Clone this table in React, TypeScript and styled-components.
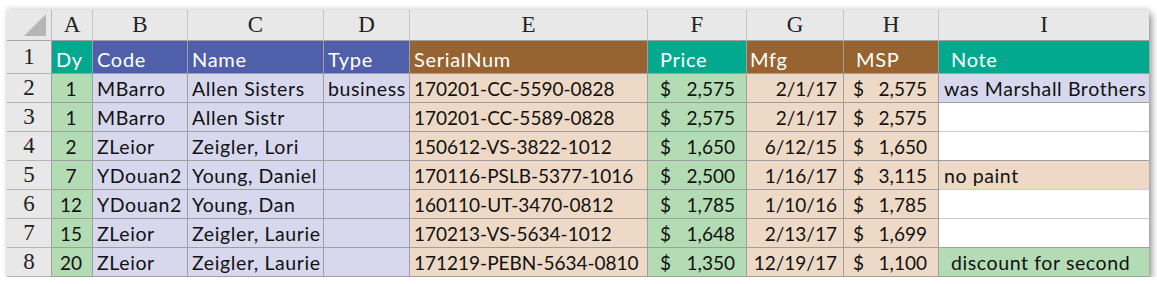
import * as React from "react";
import styled, { createGlobalStyle } from "styled-components";

const GlobalStyle = createGlobalStyle`
  body {
    margin: 0;
    background: #ffffff;
  }
`;

const palette = {
  teal: "#03a98e",
  blue: "#4f5fa9",
  brown: "#976331",
  green: "#b4dcb4",
  lav: "#d7d8ee",
  tan: "#edd9c6",
  white: "#ffffff",
};

type Tone = keyof typeof palette;

const grid = "#9f9f9f";
const lavLine = "#c9c6e6";

const Sheet = styled.div`
  margin: 10px 0 0 7px;
  width: 1142px;
  display: grid;
  grid-template-columns: 45px 41px 95px 136px 86px 238px 99px 97px 95px 210px;
  grid-template-rows: 31px 33px repeat(7, 29px);
  background: #e8e8e8;
  box-shadow: 3px 4px 7px rgba(0, 0, 0, 0.38), 0 -2px 5px rgba(0, 0, 0, 0.12);
`;

const Corner = styled.div`
  display: flex;
  align-items: flex-end;
  justify-content: flex-end;
  padding: 0 5px 4px 0;
  border-right: 1px solid #bcbcbc;
  border-bottom: 1px solid #a8a8a8;
`;

const ColLetter = styled.div<{ $last?: boolean }>`
  display: flex;
  align-items: center;
  justify-content: center;
  font-family: "Liberation Serif", serif;
  font-size: 23px;
  color: #222;
  border-right: ${(p) => (p.$last ? "none" : "1px solid #c4c4c4")};
  border-bottom: 1px solid ${grid};
`;

const RowNum = styled.div`
  display: flex;
  align-items: center;
  justify-content: center;
  font-family: "Liberation Serif", serif;
  font-size: 23px;
  color: #222;
  border-right: 1px solid ${grid};
  border-bottom: 1px solid #b4b4b4;
`;

const Cell = styled.div<{
  $tone: Tone;
  $align?: "left" | "right" | "center";
  $indent?: number;
  $line?: string;
  $last?: boolean;
  $head?: boolean;
  $num?: boolean;
}>`
  display: flex;
  align-items: center;
  justify-content: ${(p) =>
    p.$align === "right" ? "flex-end" : p.$align === "center" ? "center" : "flex-start"};
  padding: ${(p) => (p.$head ? 3 : 0)}px ${(p) => (p.$align === "right" ? 6 : 2)}px 0
    ${(p) => p.$indent ?? 4}px;
  background: ${(p) => palette[p.$tone]};
  color: ${(p) => (p.$head ? "#ffffff" : "#111111")};
  font-family: Lato, "Liberation Sans", sans-serif;
  font-size: ${(p) => (p.$head ? 20 : p.$num ? 19 : 19.5)}px;
  letter-spacing: ${(p) => (p.$head ? 0.7 : p.$num ? 0 : 0.6)}px;
  white-space: nowrap;
  border-right: ${(p) => (p.$last ? "none" : `1px solid ${grid}`)};
  border-bottom: 1px solid ${(p) => p.$line ?? grid};
`;

const Money = styled(Cell)<{ $left: number; $right: number }>`
  justify-content: space-between;
  padding: 0 ${(p) => p.$right}px 0 ${(p) => p.$left}px;
`;

const letters = ["A", "B", "C", "D", "E", "F", "G", "H", "I"];

type Row = {
  dy: string;
  code: string;
  name: string;
  type: string;
  serial: string;
  price: string;
  mfg: string;
  msp: string;
  note: string;
  noteTone: Tone;
  noteIndent?: number;
  noteLine?: string;
};

const rows: Row[] = [
  { dy: "1", code: "MBarro", name: "Allen Sisters", type: "business", serial: "170201-CC-5590-0828", price: "2,575", mfg: "2/1/17", msp: "2,575", note: "was Marshall Brothers", noteTone: "lav" },
  { dy: "1", code: "MBarro", name: "Allen Sistr", type: "", serial: "170201-CC-5589-0828", price: "2,575", mfg: "2/1/17", msp: "2,575", note: "", noteTone: "white", noteLine: lavLine },
  { dy: "2", code: "ZLeior", name: "Zeigler, Lori", type: "", serial: "150612-VS-3822-1012", price: "1,650", mfg: "6/12/15", msp: "1,650", note: "", noteTone: "white" },
  { dy: "7", code: "YDouan2", name: "Young, Daniel", type: "", serial: "170116-PSLB-5377-1016", price: "2,500", mfg: "1/16/17", msp: "3,115", note: "no paint", noteTone: "tan", noteLine: lavLine },
  { dy: "12", code: "YDouan2", name: "Young, Dan", type: "", serial: "160110-UT-3470-0812", price: "1,785", mfg: "1/10/16", msp: "1,785", note: "", noteTone: "white", noteLine: lavLine },
  { dy: "15", code: "ZLeior", name: "Zeigler, Laurie", type: "", serial: "170213-VS-5634-1012", price: "1,648", mfg: "2/13/17", msp: "1,699", note: "", noteTone: "white" },
  { dy: "20", code: "ZLeior", name: "Zeigler, Laurie", type: "", serial: "171219-PEBN-5634-0810", price: "1,350", mfg: "12/19/17", msp: "1,100", note: "discount for second", noteTone: "green", noteIndent: 12 },
];

const App = () => {
  return (
    <>
      <GlobalStyle />
      <Sheet>
        <Corner>
          <svg width="22" height="22" viewBox="0 0 22 22">
            <polygon points="22,0 22,22 0,22" fill="#b6b6b6" />
          </svg>
        </Corner>
        {letters.map((l, i) => (
          <ColLetter key={l} $last={i === letters.length - 1}>
            {l}
          </ColLetter>
        ))}

        <RowNum>1</RowNum>
        <Cell $tone="teal" $head>Dy</Cell>
        <Cell $tone="blue" $head>Code</Cell>
        <Cell $tone="blue" $head>Name</Cell>
        <Cell $tone="blue" $head>Type</Cell>
        <Cell $tone="brown" $head>SerialNum</Cell>
        <Cell $tone="teal" $head $indent={12}>Price</Cell>
        <Cell $tone="brown" $head $indent={3}>Mfg</Cell>
        <Cell $tone="brown" $head $indent={12}>MSP</Cell>
        <Cell $tone="teal" $head $indent={12} $last>Note</Cell>

        {rows.map((r, i) => (
          <React.Fragment key={i}>
            <RowNum>{i + 2}</RowNum>
            <Cell $tone="green" $align="center" $indent={0} $num>{r.dy}</Cell>
            <Cell $tone="lav">{r.code}</Cell>
            <Cell $tone="lav">{r.name}</Cell>
            <Cell $tone="lav">{r.type}</Cell>
            <Cell $tone="tan" $num>{r.serial}</Cell>
            <Money $tone="green" $num $left={12} $right={11}>
              <span>$</span>
              <span>{r.price}</span>
            </Money>
            <Cell $tone="tan" $align="right" $num>{r.mfg}</Cell>
            <Money $tone="tan" $num $left={9} $right={11}>
              <span>$</span>
              <span>{r.msp}</span>
            </Money>
            <Cell $tone={r.noteTone} $indent={r.noteIndent ?? 5} $line={r.noteLine} $last>
              {r.note}
            </Cell>
          </React.Fragment>
        ))}
      </Sheet>
    </>
  );
};

export default App;
